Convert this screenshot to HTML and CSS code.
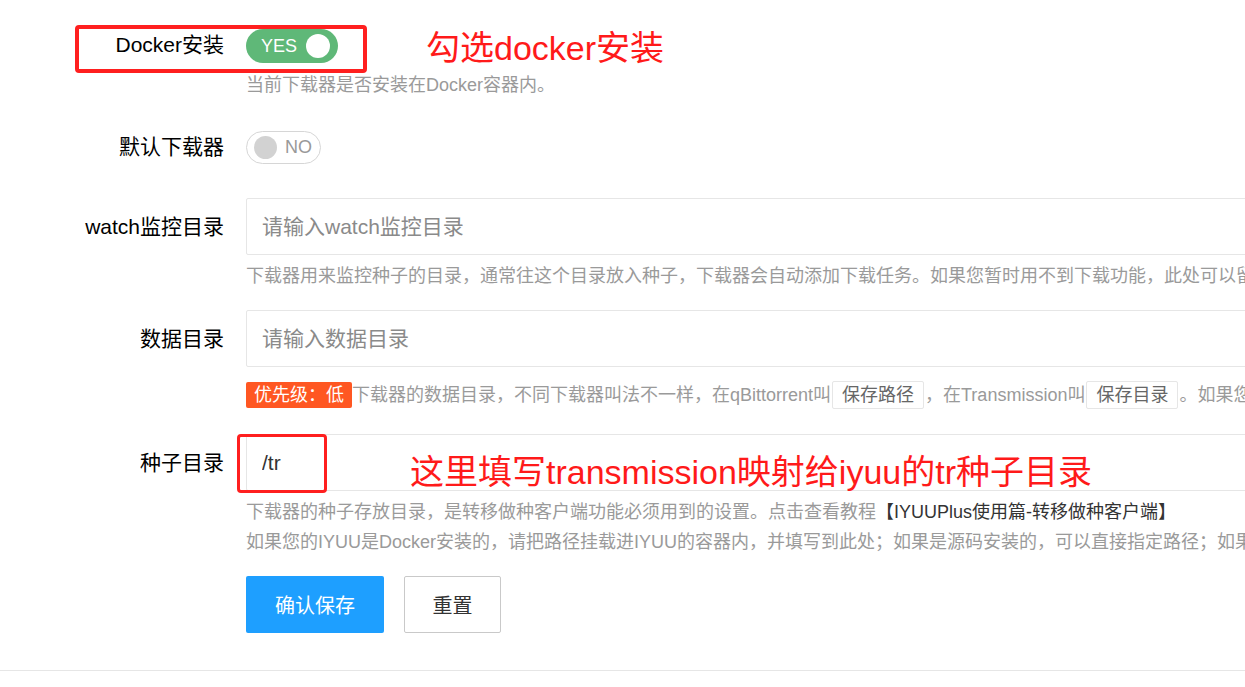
FILE: index.html
```html
<!DOCTYPE html>
<html lang="zh-CN">
<head>
    <meta charset="UTF-8">
    <meta name="viewport" content="width=device-width, initial-scale=1.0">
    <title>下载器设置</title>
    <link rel="stylesheet" href="styles.css">
</head>
<body>

<div class="page">
    <form class="form">
        <!-- Docker安装 -->
        <div class="form-item item-docker">
            <label class="form-label switch-label">Docker安装</label>
            <div class="form-block">
                <div class="switch switch-on"><span class="switch-text">YES</span><i class="switch-knob"></i></div>
                <div class="help help-docker">当前下载器是否安装在Docker容器内。</div>
            </div>
        </div>

        <!-- 默认下载器 -->
        <div class="form-item item-default">
            <label class="form-label switch-label">默认下载器</label>
            <div class="form-block">
                <div class="switch switch-off"><i class="switch-knob"></i><span class="switch-text">NO</span></div>
            </div>
        </div>

        <!-- watch监控目录 -->
        <div class="form-item item-watch">
            <label class="form-label">watch监控目录</label>
            <div class="form-block">
                <input class="input" type="text" placeholder="请输入watch监控目录">
                <div class="help">下载器用来监控种子的目录，通常往这个目录放入种子，下载器会自动添加下载任务。如果您暂时用不到下载功能，此处可以留空。</div>
            </div>
        </div>

        <!-- 数据目录 -->
        <div class="form-item item-data">
            <label class="form-label">数据目录</label>
            <div class="form-block">
                <input class="input" type="text" placeholder="请输入数据目录">
                <div class="help help-data"><span class="badge">优先级：低</span>下载器的数据目录，不同下载器叫法不一样，在qBittorrent叫<code class="code">保存路径</code>，在Transmission叫<code class="code">保存目录</code>。如果您的下载器是Docker安装的，请填写容器内的路径。</div>
            </div>
        </div>

        <!-- 种子目录 -->
        <div class="form-item item-torrent">
            <label class="form-label">种子目录</label>
            <div class="form-block">
                <input class="input input-filled" type="text" value="/tr">
                <div class="help">下载器的种子存放目录，是转移做种客户端功能必须用到的设置。点击查看教程<a class="help-link" href="#">【IYUUPlus使用篇-转移做种客户端】</a></div>
                <div class="help">如果您的IYUU是Docker安装的，请把路径挂载进IYUU的容器内，并填写到此处；如果是源码安装的，可以直接指定路径；如果是群晖套件安装的，请填写绝对路径。</div>
            </div>
        </div>

        <div class="form-item item-buttons">
            <div class="form-label"></div>
            <div class="form-block buttons">
                <button type="button" class="btn btn-primary">确认保存</button>
                <button type="reset" class="btn btn-default">重置</button>
            </div>
        </div>
    </form>

    <div class="divider"></div>

    <!-- 截图标注 -->
    <div class="mark mark-box-docker"></div>
    <div class="mark-text mark-text-docker">勾选docker安装</div>
    <div class="mark mark-box-torrent"></div>
    <div class="mark-text mark-text-torrent">这里填写transmission映射给iyuu的tr种子目录</div>
</div>

</body>
</html>
```

FILE: styles.css
```css
body {
    margin: 0;
    padding: 0;
    background-color: #fff;
    color: #333;
    font-family: "Liberation Sans", "Noto Sans CJK SC", sans-serif;
    overflow: hidden;
}

.page {
    position: relative;
    width: 1245px;
    height: 687px;
    overflow: hidden;
}

.form {
    padding-top: 29px;
    width: 1500px;
}

.form-item {
    display: flex;
}

.form-label {
    width: 224px;
    flex-shrink: 0;
    text-align: right;
    font-size: 21px;
    line-height: 57px;
    color: #000;
    margin-right: 22px;
}

.switch-label {
    line-height: 32px;
}

.form-block {
    flex: 1;
    min-width: 0;
}

/* 开关 */
.switch {
    display: inline-flex;
    align-items: center;
    box-sizing: border-box;
    border-radius: 17px;
    font-size: 18px;
}

.switch-on {
    width: 92px;
    height: 34px;
    background-color: #5fb878;
    color: #fff;
    padding: 0 8px 0 15px;
    justify-content: space-between;
}

.switch-off {
    width: 75px;
    height: 33px;
    border: 1px solid #d6d6d6;
    color: #999;
    padding: 0 8px 0 7px;
    gap: 8px;
}

.switch-knob {
    display: block;
    width: 24px;
    height: 24px;
    border-radius: 50%;
    background-color: #fff;
}

.switch-off .switch-knob {
    width: 23px;
    height: 23px;
    background-color: #d2d2d2;
}

/* 输入框 */
.input {
    display: block;
    box-sizing: border-box;
    width: 100%;
    height: 57px;
    border: 1px solid #e6e6e6;
    border-radius: 2px;
    padding: 0 15px;
    font-family: inherit;
    font-size: 21px;
    color: #333;
    outline: none;
}

.input::placeholder {
    color: #8a8a8a;
}

/* 说明文字 */
.help {
    font-size: 18px;
    line-height: 30px;
    color: #9a9a9a;
    white-space: nowrap;
}

.help-docker {
    margin-top: 7px;
}

.item-watch .help,
.item-torrent .input + .help {
    margin-top: 6px;
}

.help-data {
    margin-top: 13px;
}

.help-link {
    color: #333;
    text-decoration: none;
}

.badge {
    display: inline-block;
    background-color: #ff5722;
    color: #fff;
    padding: 0 8px;
    height: 26px;
    line-height: 26px;
    border-radius: 2px;
}

.code {
    display: inline-block;
    font-family: inherit;
    font-size: 18px;
    line-height: 26px;
    padding: 0 9px;
    margin: 0 1px;
    border: 1px solid #e6e6e6;
    border-radius: 2px;
    color: #666;
}

/* 行间距 */
.item-default {
    margin-top: 31px;
}

.item-watch {
    margin-top: 34px;
}

.item-data {
    margin-top: 19px;
}

.item-torrent {
    margin-top: 24px;
}

.item-buttons {
    margin-top: 19px;
}

.buttons {
    display: flex;
    gap: 20px;
}

.btn {
    height: 57px;
    box-sizing: border-box;
    border-radius: 2px;
    font-family: inherit;
    font-size: 20px;
    cursor: pointer;
}

.btn-primary {
    width: 138px;
    background-color: #1e9fff;
    border: none;
    color: #fff;
}

.btn-default {
    width: 97px;
    background-color: #fff;
    border: 1px solid #c9c9c9;
    color: #333;
}

.divider {
    margin-top: 37px;
    border-top: 1px solid #e6e6e6;
}

/* 标注 */
.mark {
    position: absolute;
    box-sizing: border-box;
    border: 4px solid #ff1f1f;
    border-radius: 4px;
}

.mark-box-docker {
    left: 75px;
    top: 25px;
    width: 292px;
    height: 48px;
}

.mark-box-torrent {
    left: 237px;
    top: 434px;
    width: 90px;
    height: 59px;
    border-width: 3px;
}

.mark-text {
    position: absolute;
    font-size: 34px;
    line-height: 40px;
    color: #ff1a1a;
    white-space: nowrap;
}

.mark-text-docker {
    left: 426px;
    top: 28px;
}

.mark-text-torrent {
    left: 410px;
    top: 452px;
}
```
